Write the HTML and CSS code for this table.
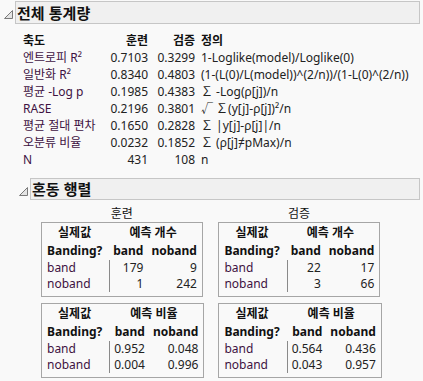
FILE: index.html
```html
<!DOCTYPE html>
<html lang="ko">
<head>
<meta charset="utf-8">
<link rel="stylesheet" href="styles.css">
</head>
<body>
<div class="sec sec1">
  <div class="sec-head">
    <svg class="tri" width="9" height="9" viewBox="0 0 9 9"><polygon points="0.5,8.5 8.5,0.5 8.5,8.5" fill="#e4e4e4" stroke="#7a7a7a" stroke-width="1"/></svg>
    <div class="sec-title">전체 통계량</div>
  </div>
  <div class="stats">
    <div class="h">축도</div><div class="h num">훈련</div><div class="h num">검증</div><div class="h def">정의</div>
    <div class="lbl">엔트로피 R²</div><div class="num">0.7103</div><div class="num">0.3299</div><div class="def">1-Loglike(model)/Loglike(0)</div>
    <div class="lbl">일반화 R²</div><div class="num">0.8340</div><div class="num">0.4803</div><div class="def">(1-(L(0)/L(model))^(2/n))/(1-L(0)^(2/n))</div>
    <div class="lbl">평균 -Log p</div><div class="num">0.1985</div><div class="num">0.4383</div><div class="def">∑ -Log(ρ[j])/n</div>
    <div class="lbl">RASE</div><div class="num">0.2196</div><div class="num">0.3801</div><div class="def">√ ∑(y[j]-ρ[j])²/n</div>
    <div class="lbl">평균 절대 편차</div><div class="num">0.1650</div><div class="num">0.2828</div><div class="def">∑ |y[j]-ρ[j]|/n</div>
    <div class="lbl">오분류 비율</div><div class="num">0.0232</div><div class="num">0.1852</div><div class="def">∑ (ρ[j]≠pMax)/n</div>
    <div class="lbl">N</div><div class="num">431</div><div class="num">108</div><div class="def">n</div>
  </div>
</div>
<div class="sec sec2">
  <div class="sec-head">
    <svg class="tri" width="9" height="9" viewBox="0 0 9 9"><polygon points="0.5,8.5 8.5,0.5 8.5,8.5" fill="#e4e4e4" stroke="#7a7a7a" stroke-width="1"/></svg>
    <div class="sec-title">혼동 행렬</div>
  </div>
  <div class="cm-grid">
    <div class="cm-col">
      <div class="cm-label">훈련</div>
      <table class="cm">
        <tr><th class="c1 ctr">실제값</th><th colspan="2" class="ctr">예측 개수</th></tr>
        <tr><th class="c1">Banding?</th><th class="c2">band</th><th class="c3">noband</th></tr>
        <tr class="d"><td class="c1 lbl">band</td><td class="c2 sep">179</td><td class="c3">9</td></tr>
        <tr class="d"><td class="c1 lbl">noband</td><td class="c2 sep">1</td><td class="c3">242</td></tr>
      </table>
      <table class="cm">
        <tr><th class="c1 ctr">실제값</th><th colspan="2" class="ctr">예측 비율</th></tr>
        <tr><th class="c1">Banding?</th><th class="c2">band</th><th class="c3">noband</th></tr>
        <tr class="d"><td class="c1 lbl">band</td><td class="c2 sep">0.952</td><td class="c3">0.048</td></tr>
        <tr class="d"><td class="c1 lbl">noband</td><td class="c2 sep">0.004</td><td class="c3">0.996</td></tr>
      </table>
    </div>
    <div class="cm-col">
      <div class="cm-label">검증</div>
      <table class="cm">
        <tr><th class="c1 ctr">실제값</th><th colspan="2" class="ctr">예측 개수</th></tr>
        <tr><th class="c1">Banding?</th><th class="c2">band</th><th class="c3">noband</th></tr>
        <tr class="d"><td class="c1 lbl">band</td><td class="c2 sep">22</td><td class="c3">17</td></tr>
        <tr class="d"><td class="c1 lbl">noband</td><td class="c2 sep">3</td><td class="c3">66</td></tr>
      </table>
      <table class="cm">
        <tr><th class="c1 ctr">실제값</th><th colspan="2" class="ctr">예측 비율</th></tr>
        <tr><th class="c1">Banding?</th><th class="c2">band</th><th class="c3">noband</th></tr>
        <tr class="d"><td class="c1 lbl">band</td><td class="c2 sep">0.564</td><td class="c3">0.436</td></tr>
        <tr class="d"><td class="c1 lbl">noband</td><td class="c2 sep">0.043</td><td class="c3">0.957</td></tr>
      </table>
    </div>
  </div>
</div>
</body>
</html>
```
FILE: styles.css
```css
html, body {
  margin: 0;
  padding: 0;
  background: #f9f9f9;
}
body {
  font-family: "Noto Sans", "Noto Sans CJK KR", sans-serif;
  font-size: 12px;
  color: #222;
  width: 423px;
  height: 381px;
  overflow: hidden;
}
.sec-head {
  display: flex;
  align-items: center;
  margin-right: 3px;
}
.sec1 .sec-head {
  padding-left: 4px;
  padding-top: 1px;
}
.sec2 .sec-head {
  padding-left: 19px;
  margin-top: 10px;
}
.tri {
  display: block;
  margin-right: 2px;
  margin-top: 4px;
}
.sec-title {
  flex: 1;
  height: 21px;
  line-height: 21px;
  border: 1px solid #c6c6c6;
  background: #f0f0f0;
  font-family: "Noto Sans CJK KR", sans-serif;
  font-weight: bold;
  font-size: 15px;
  color: #111;
  padding-left: 1px;
}
.sec2 .sec-title {
  height: 20px;
  line-height: 20px;
}
.stats {
  display: grid;
  grid-template-columns: 84px 41px 47px auto;
  grid-auto-rows: 17px;
  line-height: 17px;
  margin: 8px 0 0 23px;
  white-space: nowrap;
}
.stats .h {
  font-weight: bold;
  color: #111;
}
.num {
  text-align: right;
}
.def {
  padding-left: 6px;
}
.lbl {
  color: #3e1242;
}
.cm-grid {
  display: flex;
  gap: 14px;
  margin: 5px 0 0 41px;
}
.cm-col {
  display: flex;
  flex-direction: column;
  align-items: flex-start;
  gap: 6px;
}
.cm-label {
  align-self: stretch;
  text-align: center;
  font-weight: normal;
  color: #111;
  line-height: 17px;
  margin-bottom: -6px;
  padding-right: 2px;
}
.cm {
  border: 1px solid #a6a6a6;
  border-collapse: separate;
  border-spacing: 0;
  padding: 1px 5px 4px 5px;
  white-space: nowrap;
}
.cm th, .cm td {
  padding: 0;
  height: 18px;
  line-height: 18px;
}
.cm th {
  font-weight: bold;
  color: #111;
}
.cm tr.d td {
  height: 16px;
  line-height: 16px;
}
.cm .c1 {
  text-align: left;
  padding-right: 7px;
}
.cm .ctr {
  text-align: center;
}
.cm .c2 {
  text-align: right;
  padding-left: 4px;
}
.cm .c3 {
  text-align: right;
  padding-left: 8px;
}
.cm .sep {
  border-left: 1px solid #8a8a8a;
}
```
